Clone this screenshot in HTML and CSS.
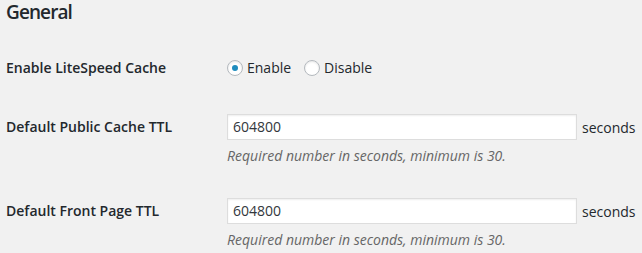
FILE: index.html
```html
<!DOCTYPE html>
<html>
<head>
<meta charset="utf-8">
<link rel="stylesheet" href="styles.css">
</head>
<body>
<div class="wrap">
  <h2 class="title">General</h2>
  <div class="row row-radio">
    <div class="label">Enable LiteSpeed Cache</div>
    <div class="field radios">
      <label class="radio"><span class="circle checked"></span>Enable</label>
      <label class="radio"><span class="circle"></span>Disable</label>
    </div>
  </div>
  <div class="row row-input">
    <div class="label">Default Public Cache TTL</div>
    <div class="field">
      <div class="line"><span class="input">604800</span><span class="unit">seconds</span></div>
      <p class="desc">Required number in seconds, minimum is 30.</p>
    </div>
  </div>
  <div class="row row-input">
    <div class="label">Default Front Page TTL</div>
    <div class="field">
      <div class="line"><span class="input">604800</span><span class="unit">seconds</span></div>
      <p class="desc">Required number in seconds, minimum is 30.</p>
    </div>
  </div>
</div>
</body>
</html>
```
FILE: styles.css
```css
html, body {
  margin: 0;
  padding: 0;
  background: #f1f1f1;
}
body {
  font-family: "Open Sans", "DejaVu Sans", sans-serif;
  color: #23282d;
  font-size: 14px;
}
.wrap {
  padding: 0 8px 0 6px;
}
.title {
  margin: 0;
  font-size: 19px;
  letter-spacing: -0.9px;
  font-weight: 600;
  line-height: 24px;
}
.row {
  display: flex;
  align-items: flex-start;
}
.label {
  width: 221px;
  flex: none;
  font-weight: 600;
  font-size: 14px;
}
.row-radio {
  margin-top: 34px;
  line-height: 20px;
}
.radios {
  display: flex;
  gap: 13px;
}
.radio {
  display: flex;
  align-items: center;
  gap: 4px;
}
.circle {
  width: 14px;
  height: 14px;
  border: 1px solid #b4b9be;
  border-radius: 50%;
  background: #fff;
  box-shadow: inset 0 1px 2px rgba(0,0,0,0.1);
  display: flex;
  align-items: center;
  justify-content: center;
}
.circle.checked::after {
  content: "";
  width: 6px;
  height: 6px;
  border-radius: 50%;
  background: #1e8cbe;
}
.row-input {
  margin-top: 36px;
}
.row-input + .row-input {
  margin-top: 33px;
}
.row-input .label {
  line-height: 26px;
}
.line {
  display: flex;
  align-items: center;
  gap: 5px;
}
.input {
  box-sizing: border-box;
  width: 350px;
  height: 26px;
  line-height: 24px;
  border: 1px solid #ddd;
  background: #fff;
  box-shadow: inset 0 1px 2px rgba(0,0,0,0.07);
  padding: 0 5px;
  font-size: 14px;
  color: #32373c;
}
.unit {
  font-size: 14px;
}
.desc {
  margin: 6px 0 0;
  font-size: 14px;
  line-height: 19px;
  font-style: italic;
  color: #666;
}
```
